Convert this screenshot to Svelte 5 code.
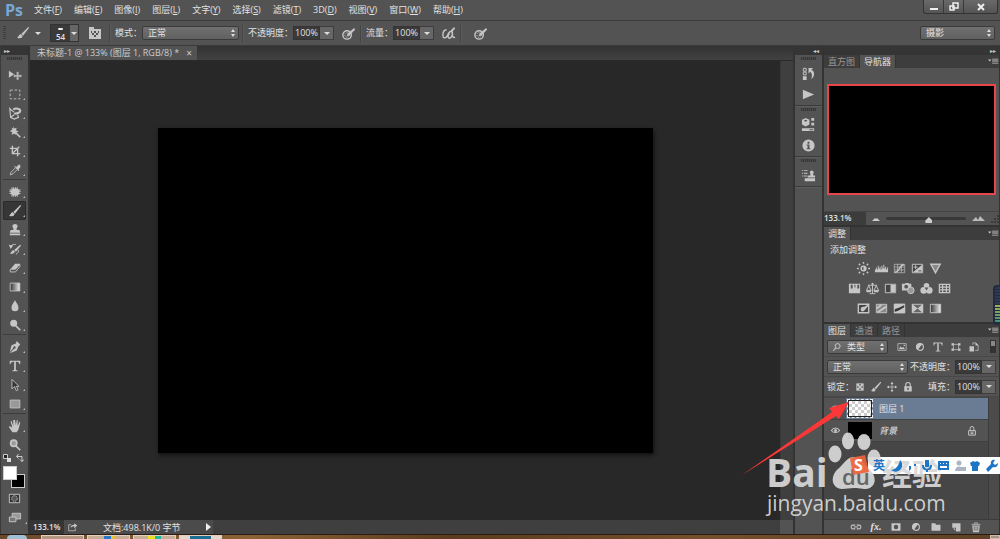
<script>
  const S = 'fill="none" stroke="currentColor"';
  const icons = {
    move: '<path d="M1 3l6 4-6 4z"/><path d="M11 5l2 2h-1v2h2V8l2 2-2 2v-1h-2v2h1l-2 2-2-2h1v-2H8v1l-2-2 2-2v1h2V7H9z" transform="translate(0 -1)" opacity=".85"/>',
    marquee: `<path ${S} stroke-dasharray="3 2" d="M2.500 3.500h11v10h-11z"/>`,
    lasso: `<path ${S} stroke-width="1.300" d="M3 4L2 3l1 10 4 2 5-2-1-3M3 4l4 3m-4 6l4-3"/><path ${S} stroke-width="2.400" d="M6 4c3-2 8-1 8 1.500S10 9 7 8.500"/>`,
    wand: `<path d="M6 1l1 3 3-1-1 3 3 1-3 2v2L7 10l-3 1 1-3-3-1 3-2-1-2 2 1z"/><path ${S} stroke-width="2" d="M8 8l6 6"/>`,
    crop: `<path ${S} stroke-width="1.600" d="M5 2v9h9M2 5h9v9M6 10l7-7"/>`,
    dropper: `<path d="M9 5l3-3 2 0 0 3-2 2 1 1-1 1-5-5 1-1z"/><path ${S} d="M8.500 5.500l-5 5-1 3 3-1 5-5"/>`,
    heal: `<path d="M5 4h6l2 2v4l-2 2H5l-2-2V6z"/><path ${S} stroke-dasharray="1 1" stroke-width="2" d="M4 3.500h8M4 12.500h8M2.500 5v6M13.500 5v6"/>`,
    brush: '<path d="M14 1l1 1-7 9-2-2zM5 9l2.500 2.500C7 14 4 15 1 13c2 0 2-3 4-4z"/>',
    stamp: '<path d="M6 8c1-2-1-3-1-4a3 3 0 016 0c0 1-2 2-1 4h3l1 3H2l1-3zM2 12h12v2H2z"/>',
    history: `<path d="M14 3l1 1-6 7-2-2zM6 9l2 2c-1 2-3 3-6 2 2-1 2-3 4-4z"/><path ${S} d="M3 6c1-3 4-4 6-3M12 9c0 3-1 4-3 5"/><path d="M1 3l5 1-3 4z"/>`,
    eraser: `<path d="M8 3h6l-5 6H3z"/><path ${S} d="M2.500 9.500h6l5-6v3l-5 6h-6z"/>`,
    gradient: `<defs><linearGradient id="gt"><stop stop-color="#333"/><stop offset="1" stop-color="#eee"/></linearGradient></defs><path fill="url(#gt)" stroke="currentColor" d="M2.500 3.500h11v9h-11z"/>`,
    drop: '<path d="M8 1c1 3 4 5 4 9a4 4 0 01-8 0c0-4 3-6 4-9z"/>',
    dodge: `<circle cx="6.500" cy="6" r="4"/><path ${S} stroke-width="2" d="M9 9l5 5"/>`,
    pen: '<path fill-rule="evenodd" d="M10 1l4 4-2 2-2 5-8 3 5-5a1.400 1.400 0 10-1-1l-4 5 2-8 5-2z"/>',
    type: '<path d="M2 2h12v4h-1c0-2-1-3-3-3H9v9c0 1 1 1 2 1v1H5v-1c1 0 2 0 2-1V3H6C4 3 3 4 3 6H2z"/>',
    arrow: `<path fill="#333" stroke="currentColor" d="M4.500 1.500v11l3-3 2 5 2-1-2-4h3z"/>`,
    rect: `<path fill="#999" stroke="currentColor" d="M2.500 3.500h11v9h-11z"/>`,
    hand: '<path d="M5 15L1 9l1-1 3 2-2-7 1-1 2 6V1h2l1 6 1-6h1v7l2-5 1 1-2 8-2 3z"/>',
    zoom: `<circle cx="6.500" cy="6" r="3.500" fill="#999" stroke="currentColor" stroke-width="2"/><path ${S} stroke-width="2" d="M9 9l5 5"/>`,
    mask: `<path fill="#333" stroke="currentColor" d="M2.500 3.500h11v9h-11z"/><circle cx="8" cy="8" r="3" fill="#555" stroke="currentColor" stroke-dasharray="1.500 1"/>`,
    screen: `<path fill="#999" stroke="currentColor" d="M5.500 3.500h9v6h-9z"/><path fill="#777" stroke="currentColor" d="M2.500 7.500h7v5h-7z"/>`,
    share: `<path ${S} d="M7 5H3.500v8h9v-3"/><path d="M6 10c0-4 2-5 5-5V3l4 3-4 4V7C8 7 7 8 6 10z"/>`,
    preset: '<path fill-rule="evenodd" d="M2 2h5v2h7v10H2zM4 6v2h1V6zm3 0v2h2V6zm4 0v2h1V6zM5 8v2h2V8zm4 0v2h2V8zM7 10v2h2v-2z"/>',
    pressure: `<circle cx="6.500" cy="9.500" r="4.500" ${S} stroke-width="1.500"/><circle cx="6.500" cy="9.500" r="2.500" ${S} stroke-dasharray="1 1"/><path d="M14 2l1 2-6 6-3 1 1-3z"/>`,
    airbrush: `<path ${S} stroke-width="1.500" d="M6 4C3 4 2 7 2 10s3 4 5 0c1-3 3-5 5-4 1 3-1 7-3 7s-2-3 0-5M12 7c0 3 0 6 3 5"/><path d="M14 1l1 2-4 4-2-1z"/>`,
    layersHistory: `<path ${S} d="M2.500 2.500h3v3h-3zM2.500 6.500h3v3h-3z"/><path d="M2 11h4v4H2zM8 2h5L11 4c4 2 4 7 0 10 1-4 1-6-1-8L8 8z"/>`,
    play: '<path d="M2 3l12 5-12 5z"/>',
    props: '<path fill-rule="evenodd" d="M5 1l4 2v5L5 10 1 8V3zm0 2L3 4l2 1 2-1zM11 1h3v3h-3zM11 6h3v3h-3zM1 12h13v3H1zm8 1v1h4v-1z"/>',
    info: '<path fill-rule="evenodd" d="M8 1.500a6.500 6.500 0 100 13 6.500 6.500 0 000-13zM7 4h2v2H7zM6 7h3v4h1v1H6v-1h1V8H6z"/>',
    clone: '<path d="M1 2h1v1H1zM3 2h4v1H3zM1 5h1v1H1zM3 5h4v1H3zM1 8h1v1H1zM3 8h3v1H3zM10 8V6a2 2 0 113 0v2h2v2H7V8zM4 11h11v3H4z"/>',
    sun: `<circle cx="8" cy="8" r="2.500" ${S} stroke-width="1.500"/><path d="M8 5v6a3 3 0 000-6z"/><path ${S} stroke-width="1.500" d="M8 1v2M8 13v2M1 8h2M13 8h2M3 3l1.500 1.500M11.500 11.500L13 13M3 13l1.500-1.500M11.500 4.500L13 3"/>`,
    levels: '<path d="M1 12V9h1V7h1v2h1V5h1v3h1V6h1v3h1V5h1v3h1V4h1v4h1V6h1v3h1V7h1v5z"/>',
    curves: `<path ${S} d="M2.500 3.500h11v9h-11zM6 3v9M10 3v9M3 6.500h10M3 9.500h10" opacity=".7"/><path ${S} stroke-width="1.500" d="M3 12c6 0 4-8 10-8"/>`,
    exposure: `<path fill="#444" stroke="currentColor" d="M2.500 3.500h11v9h-11z"/><path d="M13 4v8H3z"/><path ${S} d="M4 6.500h4M6 4.500v4"/><path stroke="#444" d="M9 10.500h3"/>`,
    vibrance: `<path fill="#888" stroke="currentColor" stroke-width="1.500" d="M3 3.500h10l-5 9z"/>`,
    hue: '<path fill-rule="evenodd" d="M2 3h12v10H2zm2 1v4h2V4zm4 0v3h1V4zm3 0v4h2V4z"/>',
    balance: `<path ${S} d="M8 2v11M3 4.500h10M4 5l-2.500 5h5zM12 5l-2.500 5h5zM5 13.500h6"/><path d="M1 10h6l-1 2H2zM9 10h6l-1 2h-4zM7 2h2v2H7z"/>`,
    bw: `<path fill="#444" stroke="currentColor" d="M2.500 3.500h11v9h-11z"/><path d="M8 4h5v8H8z"/>`,
    photo: `<path d="M1 3h3l1-1h3l1 1h2v4L8 10H1z"/><circle cx="5.500" cy="6" r="2" fill="#555"/><circle cx="10.500" cy="10" r="3.500" fill="#999" stroke="currentColor"/>`,
    mixer: `<circle cx="8" cy="5" r="3"/><circle cx="5" cy="10" r="3.500"/><circle cx="11" cy="10" r="3.500"/><path fill="#555" d="M6 7h4l-2 3z"/>`,
    table: `<path ${S} stroke-width="1.300" d="M2.500 3.500h11v9h-11zM6 3v9M10 3v9M3 6.500h10M3 9.500h10"/>`,
    invert: `<path fill="#444" stroke="currentColor" stroke-width="1.500" d="M2.500 3.500h11v9h-11z"/><path d="M14 3v1L9 10c-2 2-4 1-4-1 0-3 2-3 4-3z"/>`,
    poster: `<path fill="#888" stroke="currentColor" d="M2.500 3.500h11v9h-11z"/><path ${S} stroke-width="2" d="M3 8l5-4M4 12l9-6"/>`,
    threshold: `<path fill="#333" stroke="currentColor" d="M2.500 3.500h11v9h-11z"/><path d="M2 3h12v1L8 7 2 9zM2 12l5-2 7-4v7H2z"/>`,
    selective: `<path fill="#666" stroke="currentColor" d="M2.500 3.500h11v9h-11z"/><path d="M2 3l6 5-6 5zM14 3L8 8l6 5z"/>`,
    gmap: `<path fill="url(#gt)" stroke="currentColor" d="M2.500 3.500h11v9h-11z"/>`,
    image: `<path ${S} d="M2.500 3.500h11v9h-11z"/><path d="M4 11l2-4 2 2 2-1 2 3z"/><circle cx="11" cy="6" r="1"/>`,
    adjust: `<circle cx="8" cy="8" r="4.500" ${S} stroke-width="1.500"/><path d="M11 4L5 12a5 5 0 01-2-6c1-3 5-5 8-2z"/>`,
    shape: `<path ${S} d="M4.500 3v10M11.500 3v10M3 4.500h10M3 11.500h10"/><path d="M2 3h3v3H2zM11 3h3v3h-3zM2 10h3v3H2zM11 10h3v3h-3z"/>`,
    smart: `<path ${S} d="M6.500 5V2.500h4l3 3v7h-4"/><path d="M2 7h6v7H2z"/><path d="M10 2l4 4h-4z"/>`,
    checker: `<path ${S} d="M3.500 3.500h9v9h-9z"/><path d="M4 4h3v3H4zM9 4h3v3H9zM6 6h4v4H6zM4 9h3v3H4zM9 9h3v3H9z"/>`,
    lock: `<path ${S} stroke-width="1.500" d="M5 8V5a3 3 0 016 0v3"/><path fill-rule="evenodd" d="M3 7h10v7H3zm4 2v3h2V9z"/>`,
    lockLine: `<path ${S} stroke-width="1.300" d="M5.500 8V4.500a2.500 2.500 0 015 0V8M3.500 7.500h9v6h-9zM6 9.500h4M6 11.500h4"/>`,
    cross: `<path ${S} d="M8 3v10M3 8h10"/><path d="M8 1l2 3H6zM8 15l2-3H6zM1 8l3-2v4zM15 8l-3-2v4z"/>`,
    eye: `<path ${S} stroke-width="1.500" d="M2 8c3-5 9-5 12 0-3 4-9 4-12 0z"/><circle cx="8" cy="8" r="2.200"/>`,
    link: `<path ${S} stroke-width="1.400" d="M7 5.500H4a2.500 2.500 0 000 5h3M9 5.500h3a2.500 2.500 0 010 5H9M5 8h6"/>`,
    addMask: '<path fill-rule="evenodd" d="M2 3h12v10H2zm6 2a3 3 0 100 6 3 3 0 000-6z"/>',
    folder: '<path d="M2 3h5l1 2h6v8H2z"/>',
    page: '<path fill-rule="evenodd" d="M3 3h11v11H8V9H3zm1 7h3v3z"/>',
    trash: `<path ${S} d="M2 4.500h12M6 4V2.500h4V4"/><path fill-rule="evenodd" d="M3 6h10l-1 9H4zm2 1v6h1V7zm2.500 0v6h1V7zM10 7v6h1V7z"/>`,
    search: `<circle cx="9" cy="6.500" r="4" ${S} stroke-width="1.600"/><path ${S} stroke-width="1.800" d="M6 9.500L2 14"/>`,
    menu: '<path d="M0 5h5L2.500 8zM6 4h9v1H6zM6 6h9v1H6zM6 8h9v1H6zM6 10h9v1H6z"/>'
  };

  const menus = [['文件', 'F'], ['编辑', 'E'], ['图像', 'I'], ['图层', 'L'], ['文字', 'Y'], ['选择', 'S'], ['滤镜', 'T'], ['3D', 'D'], ['视图', 'V'], ['窗口', 'W'], ['帮助', 'H']];
  const tools = [
    ['move', 'marquee', 'lasso', 'wand', 'crop', 'dropper'],
    ['heal', 'brush', 'stamp', 'history', 'eraser', 'gradient', 'drop', 'dodge'],
    ['pen', 'type', 'arrow', 'rect'],
    ['hand', 'zoom']
  ];
  const plain = ['move', 'zoom'];
  const dock = [['layersHistory', 'play'], ['props', 'info'], ['clone']];
  const adjustments = [
    ['sun', 'levels', 'curves', 'exposure', 'vibrance'],
    ['hue', 'balance', 'bw', 'photo', 'mixer', 'table'],
    ['invert', 'poster', 'threshold', 'selective', 'gmap']
  ];
  let active = $state('brush');
</script>

{#snippet icon(name, size = 12)}
  <svg class="icon" viewBox="0 0 16 16" width={size} height={size} fill="currentColor" aria-hidden="true">{@html icons[name]}</svg>
{/snippet}

{#snippet percent(id)}
  <span class="percent"><input {id} value="100%" /><button aria-label="+"><i class="down"></i></button></span>
{/snippet}

{#snippet tabs(names, current)}
  <div class="tabs">
    {#each names as n}<button class="tab" class:current={n === current}>{n}</button>{/each}
    <button class="more" aria-label="≡">{@render icon('menu', 11)}</button>
  </div>
{/snippet}

<div class="app">
  <header class="menubar">
    <span class="logo">Ps</span>
    <nav>
      {#each menus as [label, key]}<button>{label}(<u>{key}</u>)</button>{/each}
    </nav>
    <div class="window">
      <button aria-label="_"><svg width="10" height="10"><path d="M1 6h8v2H1z" fill="#eee" /></svg></button>
      <button aria-label="▫"><svg width="10" height="10" fill="none" stroke="#eee" stroke-width="1.500"><path d="M4 1h5v5H4zM1 4h4v4H1z" /></svg></button>
      <button class="close" aria-label="×"><svg width="10" height="10" stroke="#eee" stroke-width="2"><path d="M2 2l6 6M8 2L2 8" /></svg></button>
    </div>
  </header>

  <div class="options">
    <i class="grip-v"></i>
    <button class="brushbtn" aria-label="54">{@render icon('brush', 14)}<i class="down"></i></button>
    <button class="size"><span class="tip"><i></i>54</span><span class="drop"><i class="down"></i></span></button>
    <button class="opt-icon preset" aria-label="54">{@render icon('preset', 16)}</button>
    <i class="sep"></i>
    <label for="mode">模式：</label>
    <span class="select mode"><select id="mode"><option>正常</option></select></span>
    <i class="sep"></i>
    <label for="opacity">不透明度：</label>
    {@render percent('opacity')}
    <button class="opt-icon" aria-label="%">{@render icon('pressure', 15)}</button>
    <i class="sep"></i>
    <label for="flow">流量：</label>
    {@render percent('flow')}
    <button class="opt-icon" aria-label="%">{@render icon('airbrush', 15)}</button>
    <i class="sep"></i>
    <button class="opt-icon last" aria-label="%">{@render icon('pressure', 15)}</button>
    <span class="select workspace"><select aria-label="摄影"><option>摄影</option></select></span>
  </div>

  <main>
    <aside class="toolbar">
      <div class="strip left">▸▸</div>
      <i class="grip"></i>
      {#each tools as group}
        <div class="group">
          {#each group as t}
            <button class="tool" class:active={active === t} class:plain={plain.includes(t)} aria-label={t} onclick={() => (active = t)}>{@render icon(t, 14)}</button>
          {/each}
        </div>
      {/each}
      <div class="mini">
        <svg width="8" height="8"><path fill="#222" stroke="#ccc" d="M.5.500h4v4h-4z" /><path fill="#ddd" d="M4 4h4v4H4z" /></svg>
        <svg width="8" height="8" fill="none" stroke="#ccc"><path d="M2.500 0L.5 2.500l2 2M1 2.500h5v5M4 5.500l2 2 2-2" /></svg>
      </div>
      <div class="swatches"><i class="bg"></i><i class="fg"></i></div>
      <button class="tool plain" aria-label="mask">{@render icon('mask', 15)}</button>
      <button class="tool" aria-label="screen">{@render icon('screen', 15)}</button>
    </aside>

    <section class="document">
      <div class="doctabs">
        <button class="doctab">未标题-1 @ 133% (图层 1, RGB/8) *<span>×</span></button>
      </div>
      <div class="workarea">
        <div class="stage"><div class="artboard"></div></div>
        <div class="vscroll"></div>
      </div>
      <footer class="status">
        <span class="zoomv">133.1%</span>
        <span class="info">{@render icon('share', 12)}<span class="bytes">文档:498.1K/0 字节</span><i class="right"></i></span>
        <span class="corner"></span>
      </footer>
    </section>

    <aside class="dock">
      <div class="strip">◂◂</div>
      {#each dock as group}
        <div class="dockgroup">
          <i class="grip"></i>
          {#each group as d}<button aria-label={d}>{@render icon(d, 15)}</button>{/each}
        </div>
      {/each}
    </aside>

    <aside class="panels">
      <div class="strip">▸▸</div>
      <section>
        {@render tabs(['直方图', '导航器'], '导航器')}
        <div class="navigator"><div class="preview"></div></div>
        <div class="navzoom">
          <span class="zoomv">133.1%</span>
          <svg width="8" height="6" fill="#ccc"><path d="M0 5l3-3 1 1 1-1 3 3z" /></svg>
          <input type="range" min="0" max="100" value="54" aria-label="133.1%" />
          <svg width="13" height="7" fill="#bbb"><path d="M0 6l4-4 2 3 2-4 5 5z" /></svg>
          <svg width="8" height="8" fill="#3a3a3a"><path d="M6 0h2v2H6zM3 3h2v2H3zM6 3h2v2H6zM0 6h2v2H0zM3 6h2v2H3zM6 6h2v2H6z" /></svg>
        </div>
      </section>
      <section>
        {@render tabs(['调整'], '调整')}
        <div class="adjust">
          <h2>添加调整</h2>
          {#each adjustments as row}
            <div class="adjrow">{#each row as a}<button aria-label={a}>{@render icon(a, 15)}</button>{/each}</div>
          {/each}
        </div>
      </section>
      <section class="layers">
        {@render tabs(['图层', '通道', '路径'], '图层')}
        <div class="row">
          <span class="select filter">{@render icon('search', 10)}<select aria-label="类型"><option>类型</option></select></span>
          <div class="filters">{#each ['image', 'adjust', 'type', 'shape', 'smart'] as f}<button aria-label={f}>{@render icon(f, 12)}</button>{/each}</div>
          <i class="toggle"></i>
        </div>
        <div class="row">
          <span class="select blend"><select aria-label="正常"><option>正常</option></select></span>
          <label for="lop">不透明度：</label>{@render percent('lop')}
        </div>
        <div class="row">
          <span class="locklabel">锁定：</span>
          <div class="locks">{#each ['checker', 'brush', 'cross', 'lock'] as f}<button aria-label={f}>{@render icon(f, 12)}</button>{/each}</div>
          <label for="fill">填充：</label>{@render percent('fill')}
        </div>
        <div class="listwrap">
          <ul>
            <li class="selected"><span class="eye">{@render icon('eye', 11)}</span><i class="thumb clear"></i><span>图层 1</span></li>
            <li><span class="eye">{@render icon('eye', 11)}</span><i class="thumb"></i><em>背景</em><span class="locked">{@render icon('lockLine', 12)}</span></li>
          </ul>
          <div class="lscroll"></div>
        </div>
        <div class="actions">
          <button aria-label="link">{@render icon('link', 12)}</button>
          <button class="fx">fx.</button>
          {#each ['addMask', 'adjust', 'folder', 'page', 'trash'] as f}<button aria-label={f}>{@render icon(f, 12)}</button>{/each}
        </div>
      </section>
    </aside>
  </main>

  <footer class="taskbar">
    <i class="orb"></i><i class="task"></i><i class="task blue"></i><i class="task green"></i><i class="task ps"></i><i class="desk"></i>
  </footer>

  <div class="meter"></div>

  <svg class="overlay" viewBox="730 390 270 149" width="270" height="149">
    <path d="M742 475L832 412 829 408 849 402 839 419 836 416Z" fill="#fa3837" />
    <path d="M868 457h132v17H868z" fill="#fff" />
    <g class="mark">
      <ellipse cx="835" cy="454" rx="6.500" ry="8.500" /><ellipse cx="848" cy="441" rx="6" ry="8.500" /><ellipse cx="864" cy="442" rx="6.500" ry="8" /><ellipse cx="874" cy="458" rx="6.500" ry="8.500" />
      <path d="M854 457c7 0 9 6 15 12 9 8 7 19-3 20-6 0-7-1-12-1s-7 1-12 1c-11-1-12-13-4-20 7-6 9-12 16-12z" />
      <text x="766" y="487" class="bai">Bai</text>
      <text x="882" y="485" class="jy">经验</text>
      <text x="767" y="511" class="url">jingyan.baidu.com</text>
    </g>
    <text x="842" y="485" class="du">du</text>
    <path d="M850 458l15-3 4 17-16 3z" fill="#ef6238" opacity="0.9" />
    <text x="854" y="471" class="sogou">S</text>
    <text x="873" y="470" class="ime">英</text>
    <g fill="#1d75c4">
      <path d="M900 460a6 6 0 01-9 10c4 0 8-4 9-10zM909 466h2v3l-2 2zM914 464h2v2h-2z" />
      <path d="M925 460h4v7h-4zM922 465h2c0 5 6 5 6 0h2c0 3-1 5-4 5v2h-2v-2c-3 0-4-2-4-5z" />
      <path fill-rule="evenodd" d="M938 461h11v9h-11zm2 2v1h1v-1zm3 0v1h1v-1zm3 0v1h1v-1zm-6 3v2h7v-2z" />
      <path d="M970 463l3-2c1 1 3 1 4 0l3 2-1 3h-1v5h-6v-5h-1z" />
      <path d="M986 469l5-5c-1-3 2-5 4-4l-2 3 2 2 3-2c0 3-2 5-5 4l-5 5z" />
    </g>
    <g fill="#aab4c3"><circle cx="959" cy="463" r="2.500" /><path d="M955 471c0-6 8-6 8 0z" /><path d="M960 467h6v4h-6z" /></g>
  </svg>
</div>

<style>
  :global(body) { margin: 0; background: #535353; }
  .app { position: relative; display: flex; flex-direction: column; height: 100vh; min-height: 539px; overflow: hidden; background: #535353; color: #e2e2e2; font: 9px/12px "Open Sans", "Noto Sans CJK SC", sans-serif; }
  .app * { box-sizing: border-box; }
  button, input, select { font: inherit; color: inherit; background: none; border: 0; padding: 0; margin: 0; min-width: 0; }
  button { display: flex; align-items: center; justify-content: center; white-space: nowrap; }
  i { display: block; flex: none; }
  svg { flex: none; display: block; }
  .icon { color: #c6c6c6; }
  label, .locklabel { white-space: nowrap; }

  .menubar { display: flex; align-items: center; height: 21px; flex: none; border-bottom: 1px solid #3b3b3b; }
  .logo { width: 34px; padding-left: 5px; font: bold 16px/20px "Open Sans", sans-serif; color: #78a9d6; }
  nav { display: flex; gap: 12px; }
  .window { display: flex; align-self: flex-start; margin: 0 2px 0 auto; height: 14px; border: 1px solid #333; border-top: 0; border-radius: 0 0 3px 3px; background: linear-gradient(#696969, #555); }
  .window button { width: 20px; border-right: 1px solid #383838; }
  .window .close { width: 33px; border: 0; }

  .options { display: flex; align-items: center; height: 25px; flex: none; border-bottom: 1px solid #3b3b3b; padding-right: 5px; }
  .grip-v { width: 3px; height: 14px; margin: 0 9px 0 3px; background: repeating-linear-gradient(#3c3c3c 0 1px, #555 1px 2px); }
  .brushbtn { gap: 5px; width: 27px; }
  .down { border: 3px solid transparent; border-top-color: #ddd; border-bottom: 0; }
  .size { width: 29px; height: 18px; margin-left: 8px; background: #3a3a3a; border: 1px solid #333; }
  .tip { display: flex; flex-direction: column; align-items: center; flex: 1; font-size: 8px; font-weight: 600; line-height: 9px; }
  .tip i { width: 5px; height: 2px; margin: 2px 0; border-radius: 2px; background: #eee; }
  .drop { display: flex; align-items: center; justify-content: center; width: 8px; height: 16px; background: #666; }
  .opt-icon { width: 26px; height: 20px; padding-left: 2px; }
  .opt-icon.preset { width: 30px; }
  .sep { width: 2px; height: 17px; background: #444; border-right: 1px solid #5c5c5c; margin-right: 4px; }
  .select { position: relative; display: flex; align-items: center; height: 14px; border: 1px solid #3a3a3a; border-radius: 2px; background: linear-gradient(#707070, #616161); }
  .select select { appearance: none; width: 100%; height: 12px; padding-left: 5px; outline: 0; }
  .select::before, .select::after { content: ""; position: absolute; right: 3px; border: 2px solid transparent; pointer-events: none; }
  .select::before { top: 2px; border-bottom: 3px solid #ddd; border-top: 0; }
  .select::after { bottom: 2px; border-top: 3px solid #ddd; border-bottom: 0; }
  .mode { width: 97px; margin: 0 3px 0 0; }
  .workspace { width: 75px; margin-left: auto; }
  .percent { display: flex; flex: none; height: 14px; }
  .percent input { width: 27px; background: #3a3a3a; border: 1px solid #343434; text-align: center; }
  .percent button { width: 14px; background: #666; border: 1px solid #3d3d3d; border-left: 0; }

  main { display: flex; flex: 1; min-height: 0; background: #333; }
  .strip { height: 9px; flex: none; background: #353535; color: #ccc; font: 6px/9px "DejaVu Sans", sans-serif; text-align: right; padding: 0 3px; }
  .strip.left { text-align: left; }
  .grip { width: 15px; height: 3px; margin: 2px auto; background: repeating-linear-gradient(90deg, #383838 0 1px, #484848 1px 2px); }

  .toolbar { width: 28px; flex: none; margin-right: 2px; background: #535353; border-left: 1px solid #3b3b3b; }
  .toolbar > .grip { margin: 2px auto 5px; }
  .group { border-bottom: 1px solid #3c3c3c; margin: 0 2px 2px; }
  .group:nth-last-of-type(3) { border: 0; margin-bottom: 0; }
  .tool { position: relative; width: 100%; height: 19px; border-radius: 2px; }
  .tool::after { content: ""; position: absolute; right: 1px; bottom: 3px; border: 1px solid #bbb; border-top-color: transparent; border-left-color: transparent; }
  .tool.plain::after { display: none; }
  .tool.active { background: #363636; box-shadow: inset 0 0 0 1px #2b2b2b; }
  .mini { display: flex; justify-content: space-between; padding: 0 4px 0 2px; margin-bottom: 4px; }
  .swatches { display: grid; grid-template: 8px 14px / 8px 14px; padding-left: 2px; margin-bottom: 1px; }
  .swatches i { width: 14px; height: 14px; border: 1px solid #ccc; }
  .fg { grid-area: 1 / 1; background: #fff; }
  .bg { grid-area: 2 / 2; background: #000; }

  .document { display: flex; flex-direction: column; flex: 1; min-width: 0; }
  .doctabs { display: flex; height: 15px; flex: none; background: linear-gradient(#333, #414141); border-bottom: 1px solid #2a2a2a; }
  .doctab { background: #535353; padding: 0 5px 0 7px; gap: 7px; color: #ccc; }
  .doctab span { font-size: 10px; }
  .workarea { display: flex; flex: 1; min-height: 0; }
  .stage { display: flex; align-items: center; justify-content: center; flex: 1; background: #282828; }
  .artboard { width: 66%; aspect-ratio: 496 / 326; background: #000; box-shadow: 1px 2px 4px #111; }
  .vscroll { width: 13px; background: #3f3f3f; border-left: 1px solid #383838; }
  .status { display: flex; height: 14px; flex: none; background: #3f3f3f; line-height: 13px; }
  .zoomv { font-size: 8px; font-weight: 600; }
  .status .zoomv { width: 34px; padding-left: 3px; background: #353535; }
  .info { display: flex; align-items: center; width: 149px; padding: 0 2px; background: #4b4b4b; }
  .bytes { margin: 0 auto 0 25px; }
  .right { border: 4px solid transparent; border-left: 5px solid #eee; border-right: 0; }
  .corner { width: 13px; margin-left: auto; background: #535353; }

  .dock { width: 27px; flex: none; margin: 0 2px; background: #535353; }
  .dockgroup { padding: 1px 0 0; border-bottom: 1px solid #3b3b3b; box-shadow: 0 1px #5d5d5d; }
  .dockgroup .grip { margin: 1px auto 3px; }
  .dockgroup button { width: 100%; height: 21px; }

  .panels { display: flex; flex-direction: column; width: 175px; flex: none; margin-right: 1px; }
  .panels section { background: #535353; margin-bottom: 2px; }
  .tabs { display: flex; height: 13px; background: #3d3d3d; }
  .tab { padding: 0 4px; color: #999; border-right: 1px solid #333; }
  .tab.current { background: #535353; color: #e2e2e2; }
  .more { margin-left: auto; }
  .navigator { padding: 16px 3px; border-bottom: 1px solid #454545; }
  .preview { height: 111px; background: #000; border: 2px solid #e5474b; }
  .navzoom { display: flex; align-items: center; height: 13px; gap: 6px; }
  .navzoom .zoomv { width: 42px; height: 100%; background: #3c3c3c; }
  .navzoom input { appearance: none; flex: 1; height: 12px; }
  .navzoom input::-webkit-slider-runnable-track { height: 3px; background: #393939; border-radius: 2px; }
  .navzoom input::-webkit-slider-thumb { appearance: none; width: 7px; height: 6px; background: #ccc; clip-path: polygon(50% 0, 100% 60%, 100% 100%, 0 100%, 0 60%); }
  .adjust { height: 82px; padding: 4px 0 0 6px; }
  h2 { margin: 0 0 2px; font: 9px/12px "Open Sans", "Noto Sans CJK SC", sans-serif; }
  .adjrow { display: flex; justify-content: center; gap: 3px; height: 20px; padding-right: 30px; }
  .adjrow button { width: 15px; }

  .panels .layers { display: flex; flex-direction: column; flex: 1; min-height: 0; margin-bottom: 0; }
  .row { display: flex; align-items: center; flex: none; height: 20px; padding: 0 3px; border-bottom: 1px solid #484848; }
  .row label { margin-left: auto; }
  .filter { width: 61px; padding-left: 4px; }
  .filters { display: flex; gap: 6px; margin-left: 8px; }
  .toggle { width: 6px; height: 13px; margin-left: auto; background: linear-gradient(#888 50%, #333 50%); border: 1px solid #333; }
  .blend { width: 81px; }
  .locks { display: flex; gap: 4px; }
  .listwrap { display: flex; flex: 1; min-height: 0; background: #464646; }
  ul { flex: 1; margin: 0; padding: 1px 0 0; list-style: none; }
  li { display: flex; align-items: center; height: 22px; background: #535353; border-bottom: 1px solid #414141; }
  .selected { background: linear-gradient(90deg, #535353 22px, #6a7b94 22px); }
  .eye { display: flex; justify-content: center; width: 22px; }
  .thumb { width: 24px; height: 17px; margin: 0 7px 0 2px; background: #000; }
  .thumb.clear { background: conic-gradient(#ccc 25%, #fff 0 50%, #ccc 0 75%, #fff 0) 0 0 / 6px 6px; border: 1px solid #222; outline: 1px dashed #eee; }
  em { font-style: italic; }
  .locked { margin: 0 10px 0 auto; }
  .lscroll { width: 11px; background: #4b4b4b; border-left: 1px solid #3c3c3c; }
  .actions { display: flex; align-items: center; gap: 6px; height: 15px; flex: none; padding-left: 25px; border-top: 1px solid #3b3b3b; }
  .actions button { width: 14px; }
  .actions .fx { font: italic bold 10px/12px "Liberation Serif", serif; }

  .taskbar { display: flex; gap: 3px; height: 5px; flex: none; border-top: 1px solid #2a1c12; background: linear-gradient(90deg, #6b4a2c, #8b6236 25%, #5b3c1e 45%, #75502b 70%, #5e4125); }
  .orb { width: 20px; margin: 0 11px 0 7px; border-radius: 10px 10px 0 0; background: #9fc0d5; }
  .task { width: 43px; border: 1px solid #e2cfc0; border-bottom: 0; background: #b39780; }
  .blue { background: linear-gradient(90deg, #c8ad96 40%, #2878c8 40% 55%, #e8c030 55% 65%, #c8ad96 65%); }
  .green { background: linear-gradient(90deg, #c8ad96 35%, #e8e020 35% 50%, #20b8a0 50% 65%, #c8ad96 65%); }
  .ps { background: linear-gradient(90deg, #e5d6cb 25%, #1c6e92 25% 75%, #e5d6cb 75%); }
  .desk { width: 10px; margin-left: auto; background: #a59282; border: 1px solid #c9bbae; }

  .meter { position: absolute; right: 0; top: 285px; width: 7px; height: 40px; padding: 0; border: 2px solid #232c40; border-right: 0; border-radius: 4px 0 0 4px; background: repeating-linear-gradient(transparent 0 2px, #232c40 2px 3px), linear-gradient(#2e3a52 50%, #a5b050 50%, #35957d); }
  .overlay { position: absolute; right: 0; bottom: 0; pointer-events: none; }
  .sogou { font: bold 16px "Open Sans", sans-serif; fill: #fff; }
  .ime { font: bold 12px "Noto Sans CJK SC", sans-serif; fill: #1d75c4; }
  .mark { fill: #d8d8d8; opacity: 0.93; }
  .bai { font: bold 39px "Open Sans", sans-serif; }
  .du { font: 600 22px "Open Sans", sans-serif; fill: #666; }
  .jy { font: bold 30px "Noto Sans CJK SC", sans-serif; }
  .url { font: 21px "Open Sans", sans-serif; }
</style>
